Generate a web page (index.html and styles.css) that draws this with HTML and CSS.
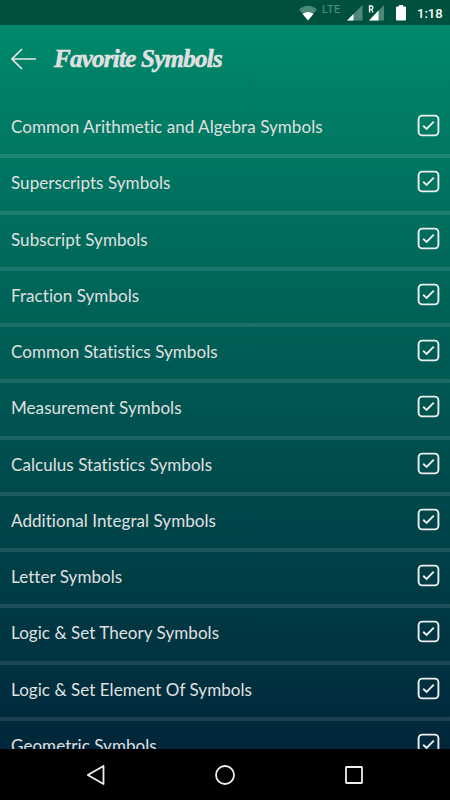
FILE: index.html
```
<!DOCTYPE html>
<html lang="en">
<head>
    <meta charset="UTF-8">
    <meta name="viewport" content="width=device-width, initial-scale=1.0">
    <title>Favorite Symbols</title>
    <link rel="stylesheet" href="styles.css">
</head>
<body>
    <!-- Status bar -->
    <div class="status">
        <svg class="wifi" width="20" height="16" viewBox="0 0 20 16">
            <path d="M1 4.5Q10 -3 19 4.5L10 15.5Z" fill="#4a8978"/>
            <path d="M4.6 9Q10 5 15.4 9L10 15.5Z" fill="#fff"/>
        </svg>
        <span class="lte">LTE</span>
        <svg class="signal" width="16" height="16" viewBox="0 0 16 16">
            <path d="M15.5 0V15.5H0Z" fill="#4a8978"/>
            <path d="M6.5 9V15.5H0Z" fill="#fff"/>
        </svg>
        <svg class="roaming" width="17" height="16" viewBox="0 0 17 16">
            <path d="M16 0V15.5H1Z" fill="#4a8978"/>
            <path d="M10.5 5.5V15.5H1Z" fill="#fff"/>
            <path d="M0 0H6V8H0Z" fill="#00503f"/>
            <path d="M1.5 7.5V1H3.2A1.7 1.7 0 0 1 3.2 4.5H1.5M3.3 4.5L5 7.5" fill="none" stroke="#fff" stroke-width="1.3"/>
        </svg>
        <svg class="battery" width="10" height="16" viewBox="0 0 10 16">
            <path d="M3 0H7V1.5H9Q10 1.5 10 2.5V14.5Q10 15.5 9 15.5H1Q0 15.5 0 14.5V2.5Q0 1.5 1 1.5H3Z" fill="#fff"/>
        </svg>
        <span class="time">1:18</span>
    </div>

    <div class="header">
        <svg width="26" height="22" viewBox="0 0 26 22">
            <path d="M11 1L1 11L11 21M1 11H25" fill="none" stroke="#e8e8e8" stroke-width="1.6"/>
        </svg>
        <h1>Favorite Symbols</h1>
    </div>

    <ul class="list" id="list"></ul>

    <!-- Navigation bar -->
    <div class="nav">
        <svg width="20" height="22" viewBox="0 0 20 22">
            <path d="M17.5 2V20L1.8 11Z" fill="none" stroke="#eee" stroke-width="1.8" stroke-linejoin="round"/>
        </svg>
        <svg width="20" height="22" viewBox="0 0 20 22">
            <circle cx="10" cy="11" r="9" fill="none" stroke="#eee" stroke-width="1.8"/>
        </svg>
        <svg width="20" height="22" viewBox="0 0 20 22">
            <rect x="2" y="3" width="16" height="16" rx="0.5" fill="none" stroke="#eee" stroke-width="1.8"/>
        </svg>
    </div>

    <script>
        const categories = [
            "Common Arithmetic and Algebra Symbols",
            "Superscripts Symbols",
            "Subscript Symbols",
            "Fraction Symbols",
            "Common Statistics Symbols",
            "Measurement Symbols",
            "Calculus Statistics Symbols",
            "Additional Integral Symbols",
            "Letter Symbols",
            "Logic & Set Theory Symbols",
            "Logic & Set Element Of Symbols",
            "Geometric Symbols"
        ];
        const check = `<svg class="check" width="23" height="23" viewBox="0 0 23 23">
            <rect x="1.6" y="1.6" width="19.8" height="19.8" rx="3.6"/>
            <path d="M6.2 11.8L9.6 15L16.8 7.6"/>
        </svg>`;
        const list = document.getElementById('list');
        categories.forEach(function (item) {
            const row = document.createElement('li');
            const name = document.createElement('span');
            name.textContent = item;
            row.appendChild(name);
            row.insertAdjacentHTML('beforeend', check);
            list.appendChild(row);
        });
    </script>
</body>
</html>
```
FILE: styles.css
```
*{
    margin: 0;
    padding: 0;
    box-sizing: border-box;
}
body {
    display: flex;
    flex-direction: column;
    height: 800px;
    width: 450px;
    overflow: hidden;
    font-family: Lato, sans-serif;
    color: #e0e0e0;
    background: linear-gradient(#008c6c, #00263a 750px);
}
svg {
    display: block;
    flex-shrink: 0;
}
.status {
    display: flex;
    flex-shrink: 0;
    height: 25px;
    padding: 5px 0 0 298px;
    background: #00503f;
    font-family: Roboto, sans-serif;
}
.lte {
    width: 19px;
    margin-left: 4px;
    font-size: 11px;
    font-weight: 500;
    line-height: 9px;
    letter-spacing: 0.4px;
    color: #4a8978;
}
.signal {
    margin-left: 6px;
}
.roaming {
    margin-left: 5px;
}
.battery {
    margin-left: 11px;
}
.time {
    margin-left: 11px;
    font-size: 13px;
    font-weight: 500;
    line-height: 17px;
    color: #fff;
}
.header {
    display: flex;
    flex-shrink: 0;
    align-items: center;
    height: 77px;
    padding: 0 0 9px 11px;
}
h1 {
    margin-left: 17px;
    font-family: "Liberation Serif", serif;
    font-size: 25px;
    font-style: italic;
    font-weight: bold;
    line-height: 30px;
    letter-spacing: -0.75px;
    white-space: nowrap;
    -webkit-text-stroke: 0.5px #e4e4e4;
}
.list {
    flex: 1;
    overflow: hidden;
    list-style: none;
}
.list li {
    display: flex;
    justify-content: space-between;
    height: 56.25px;
    padding: 12px 10px 0 11px;
    border-bottom: 4px solid rgba(255, 255, 255, 0.11);
    font-size: 17px;
    font-variant-ligatures: none;
    letter-spacing: 0.06px;
    line-height: 26px;
    white-space: nowrap;
}
.check {
    fill: none;
    stroke: #eee;
    stroke-width: 1.9;
}
.nav {
    display: flex;
    flex-shrink: 0;
    justify-content: space-between;
    height: 51px;
    padding: 15px 86px 0;
    background: #000;
}
```
